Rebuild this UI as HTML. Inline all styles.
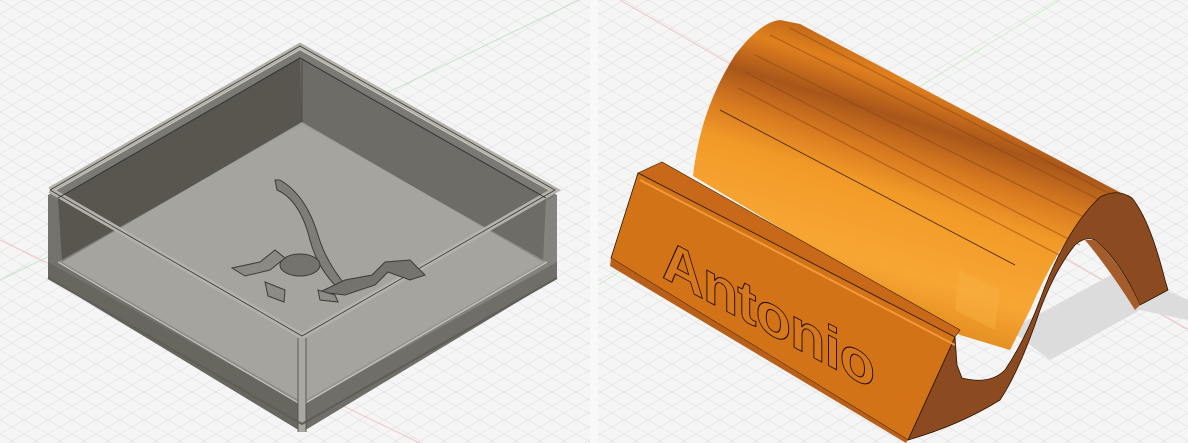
<!DOCTYPE html>
<html><head><meta charset="utf-8"><style>
html,body{margin:0;padding:0;background:#f5f5f5;overflow:hidden}
svg{display:block}
</style></head><body>
<svg width="1188" height="443" viewBox="0 0 1188 443" xmlns="http://www.w3.org/2000/svg">
<defs>
<pattern id="g" width="24" height="14" patternUnits="userSpaceOnUse">
<path d="M0 0 L24 14 M0 14 L24 0" stroke="#e2e2e2" stroke-width="0.7" fill="none"/>
</pattern>
<linearGradient id="top" x1="0.75" y1="0" x2="0.35" y2="1">
<stop offset="0" stop-color="#d9771e"/>
<stop offset="0.15" stop-color="#b35f18"/>
<stop offset="0.25" stop-color="#e0801e"/>
<stop offset="0.35" stop-color="#a9561a"/>
<stop offset="0.45" stop-color="#d77a20"/>
<stop offset="0.55" stop-color="#f29a28"/>
<stop offset="0.75" stop-color="#f7a634"/>
<stop offset="0.9" stop-color="#e08a1e"/>
<stop offset="1" stop-color="#c46a18"/>
</linearGradient>
</defs>
<rect width="1188" height="443" fill="#f5f5f5"/>
<rect width="1188" height="443" fill="url(#g)"/>
<line x1="0" y1="280" x2="600" y2="-10" stroke="#c4e6c4" stroke-width="1"/>
<line x1="0" y1="240" x2="420" y2="443" stroke="#f2c4c4" stroke-width="1"/>
<line x1="620" y1="0" x2="1188" y2="330" stroke="#f2c4c4" stroke-width="1"/>
<line x1="590" y1="290" x2="1060" y2="0" stroke="#cdeccd" stroke-width="1"/>
<rect x="590" y="0" width="8" height="443" fill="#f8f8f8"/>

<!-- LEFT BOX -->
<polygon points="48,195 300,50 557,195 557,278 302,432 48,278" fill="#7a7973"/>
<polygon points="302,338 557,195 557,278 302,432" fill="#84837d"/>
<polygon points="48,195 302,338 302,432 48,278" fill="#73726c"/>
<polygon points="48,262 302,405 302,432 48,278" fill="#67665f"/>
<polygon points="302,405 557,262 557,278 302,432" fill="#6f6e68"/>
<!-- inner walls -->
<polygon points="58,198 300,58 302,122 62,262" fill="#58564f"/>
<polygon points="300,58 546,198 543,262 302,122" fill="#6d6c66"/>
<!-- floor -->
<polygon points="62,262 302,122 543,262 302,402" fill="#9d9c96"/>
<polygon points="58,262 302,124 547,262 302,405" fill="#b0afa9" opacity="0.45"/>
<polyline points="58,262 302,405 547,262" fill="none" stroke="#c8c7c1" stroke-width="1.2"/>
<!-- rim -->
<polyline points="50,190 300,46 555,190 302,336 50,190" fill="none" stroke="#b4b2aa" stroke-width="6"/>
<polyline points="50,190 300,46 555,190 302,336 50,190" fill="none" stroke="#3a3a36" stroke-width="0.8"/>
<polyline points="58,198 300,58 546,198" fill="none" stroke="#333" stroke-width="1"/>
<line x1="302" y1="122" x2="302" y2="58" stroke="#4a4944" stroke-width="1"/>
<line x1="302" y1="338" x2="302" y2="432" stroke="#a8a7a1" stroke-width="8"/>
<line x1="298" y1="338" x2="298" y2="432" stroke="#4a4944" stroke-width="0.8"/>
<line x1="306" y1="338" x2="306" y2="432" stroke="#4a4944" stroke-width="0.8"/>
<polyline points="48,278 302,424 557,278" fill="none" stroke="#5e5d58" stroke-width="2"/>
<!-- dragon relief -->
<g fill="none" stroke="#3d3c38" stroke-width="1">
<path d="M275 180 L277 190 Q300 200 310 240 Q318 270 340 290 L346 286 Q326 262 318 235 Q306 195 280 180 Z" fill="#7e7d78"/>
<ellipse cx="300" cy="265" rx="20" ry="11" fill="#74736e"/>
<path d="M232 268 L260 262 L275 250 L285 258 L270 270 L245 276 Z" fill="#8a8984"/>
<path d="M320 292 L345 280 L372 275 L385 262 L410 260 L425 275 L410 280 L388 272 L375 285 L345 295 Z" fill="#74736e"/>
<path d="M265 282 L285 290 L284 302 L268 296 Z" fill="#8d8c87"/>
<path d="M318 290 L335 295 L338 302 L320 300 Z" fill="#8d8c87"/>
</g>

<!-- RIGHT OBJECT -->
<polygon points="1010,330 1120,270 1188,300 1188,320 1140,310 1050,360" fill="#dcdcdc"/>
<!-- curved top surface -->
<path d="M693 176 Q700 110 735 55 Q760 22 780 20 L800 24 L1125 195 Q1110 190 1095 205 Q1060 240 1030 310 L1010 350 L960 335 Z" fill="url(#top)"/>
<path d="M720 110 L1015 265" stroke="#3a2000" stroke-width="0.8" fill="none"/>
<g stroke="#8e4510" stroke-width="1.5" opacity="0.45" fill="none">
<path d="M770 35 L1110 205"/><path d="M755 55 L1100 225"/><path d="M745 72 L1080 245"/><path d="M738 88 L1065 258"/><path d="M790 28 L1118 198"/>
</g>
<path d="M960 270 L1000 290 L995 330 L955 310 Z" fill="#f7b040" opacity="0.5"/>
<!-- end profile -->
<path d="M908 440 L955 337 L957 365 L962 378 Q990 385 1005 370 Q1025 340 1040 300 Q1065 230 1100 197 Q1118 188 1132 198 Q1150 220 1165 280 L1168 290 L1140 305 Q1120 260 1095 240 Q1085 236 1075 245 Q1055 270 1040 310 Q1020 370 1000 400 Q960 425 908 440 Z" fill="#8b4a1f" stroke="#2a1500" stroke-width="0.8"/>
<path d="M1085 240 L1095 240 Q1120 262 1140 305 L1135 310 Q1110 270 1085 240 Z" fill="#a45c2c"/>
<!-- base top strip -->
<polygon points="638,173 662,162 960,330 955,337" fill="#c8691a" stroke="#3a2000" stroke-width="0.6"/>
<!-- base front face -->
<polygon points="638,173 955,337 908,440 611,258" fill="#d27318" stroke="#2a1500" stroke-width="0.8"/>
<polygon points="611,258 908,440 906,443 610,266" fill="#b8601a"/>
<line x1="640" y1="180" x2="955" y2="345" stroke="#f09a3a" stroke-width="2"/>
<!-- text -->
<g transform="translate(662,277) skewY(28)">
<text x="0" y="0" font-family="'Liberation Sans',sans-serif" font-weight="bold" font-size="58" fill="#d8781c" stroke="#1a0a00" stroke-width="0.9" letter-spacing="-1">Antonio</text>
</g>
</svg>
</body></html>
